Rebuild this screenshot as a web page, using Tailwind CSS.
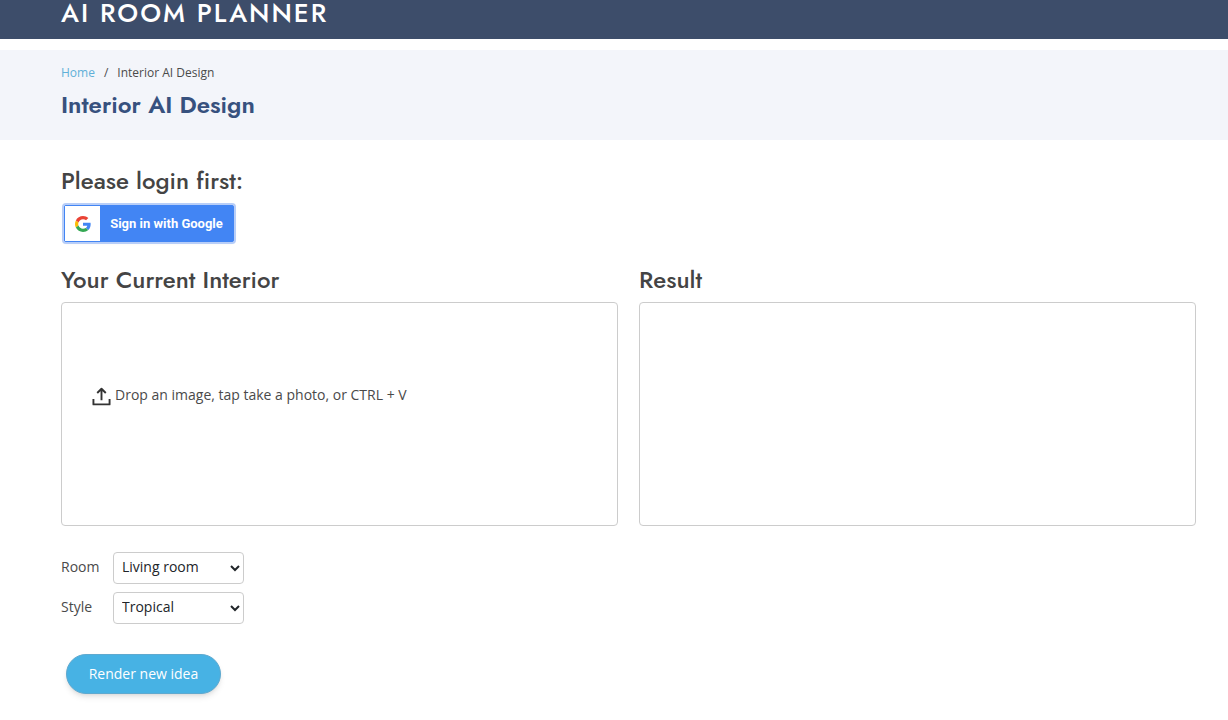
<!DOCTYPE html>
<html lang="en">
<head>
    <meta charset="UTF-8">
    <meta name="viewport" content="width=device-width, initial-scale=1.0">
    <title>Interior AI Design</title>
    <script src="https://cdn.jsdelivr.net/npm/@tailwindcss/browser@4"></script>
</head>
<body class="bg-white text-[#4a4a4a] font-['Open_Sans',sans-serif]">
    <header class="bg-[#3d4d6a] pl-[61px] pr-8 pb-[13px]">
        <a href="#" class="block text-[26px] leading-[26px] font-medium tracking-[2px] text-white uppercase font-['Jost','Lato',sans-serif]">AI Room Planner</a>
    </header>

    <!-- Breadcrumbs -->
    <section class="mt-[11px] bg-[#f3f5fa] pl-[61px] pr-8 pt-[13px] pb-[17px]">
        <nav aria-label="Breadcrumb">
            <ol class="flex text-[12px] leading-5">
                <li><a href="#" class="text-[#5fb0d8]">Home</a></li>
                <li class="flex"><span class="px-[9px]">/</span>Interior AI Design</li>
            </ol>
        </nav>
        <h2 class="mt-1 text-[24px] leading-9 font-semibold text-[#37517e] font-['Jost','Lato',sans-serif]">Interior AI Design</h2>
    </section>

    <main class="pl-[61px] pr-8 pt-[23px]">
        <h3 class="text-[24px] leading-9 font-medium text-[#444444] font-['Jost','Lato',sans-serif]">Please login first:</h3>
        <button type="button" class="mt-[6px] ml-[3px] flex h-[37px] w-[170px] items-center rounded-[2px] border border-[#4285f4] bg-[#4285f4] ring-2 ring-[#b8cef8] shadow-sm">
            <span class="flex h-[35px] w-[35px] items-center justify-center bg-white">
                <svg class="h-4 w-4" viewBox="0 0 48 48">
                    <path fill="#EA4335" d="M24 9.5c3.54 0 6.71 1.22 9.21 3.6l6.85-6.85C35.9 2.38 30.47 0 24 0 14.62 0 6.51 5.38 2.56 13.22l7.98 6.19C12.43 13.72 17.74 9.5 24 9.5z"/>
                    <path fill="#4285F4" d="M46.98 24.55c0-1.57-.15-3.09-.38-4.55H24v9.02h12.94c-.58 2.96-2.26 5.48-4.78 7.18l7.73 6c4.51-4.18 7.09-10.36 7.09-17.65z"/>
                    <path fill="#FBBC05" d="M10.53 28.59c-.48-1.45-.76-2.99-.76-4.59s.27-3.14.76-4.59l-7.98-6.19C.92 16.46 0 20.12 0 24c0 3.88.92 7.54 2.56 10.78l7.97-6.19z"/>
                    <path fill="#34A853" d="M24 48c6.48 0 11.93-2.13 15.89-5.81l-7.73-6c-2.15 1.45-4.92 2.3-8.16 2.3-6.26 0-11.57-4.22-13.47-9.91l-7.98 6.19C6.51 42.62 14.62 48 24 48z"/>
                </svg>
            </span>
            <span class="flex-1 text-center text-[13px] font-bold whitespace-nowrap text-white font-['Roboto',sans-serif]">Sign in with Google</span>
        </button>

        <div class="mt-5 grid grid-cols-2 gap-[21px]">
            <section>
                <h3 class="text-[24px] leading-9 font-medium text-[#444444] font-['Jost','Lato',sans-serif]">Your Current Interior</h3>
                <label class="mt-1 flex h-56 cursor-pointer items-start gap-1 rounded-[4px] border border-[#cccccc] px-[30px] pt-20">
                    <svg class="mt-1 h-[19px] w-[19px]" viewBox="0 0 20 20" fill="none" stroke="#333333" stroke-width="2" stroke-linejoin="round">
                        <path d="M1.5 12.5v5.8h17v-5.8M10 14V2M5.5 6.3L10 1.8l4.5 4.5"/>
                    </svg>
                    <span class="text-[14px] leading-6">Drop an image, tap take a photo, or CTRL + V</span>
                    <input type="file" accept="image/*" class="hidden">
                </label>
            </section>
            <section>
                <h3 class="text-[24px] leading-9 font-medium text-[#444444] font-['Jost','Lato',sans-serif]">Result</h3>
                <div class="mt-1 h-56 rounded-[4px] border border-[#cccccc]"></div>
            </section>
        </div>

        <form class="mt-[26px] text-[14px]">
            <div class="flex items-center">
                <label for="room" class="w-[52px] pb-1">Room</label>
                <select id="room" class="h-8 w-[131px] rounded-[4px] border border-[#cccccc] bg-white px-1 pb-[3px] text-[#212529]">
                    <option>Living room</option>
                    <option>Bedroom</option>
                    <option>Kitchen</option>
                </select>
            </div>
            <div class="mt-2 flex items-center">
                <label for="style" class="w-[52px] pb-1">Style</label>
                <select id="style" class="h-8 w-[131px] rounded-[4px] border border-[#cccccc] bg-white px-1 pb-[3px] text-[#212529]">
                    <option>Tropical</option>
                    <option>Modern</option>
                    <option>Minimalist</option>
                </select>
            </div>
            <button type="button" class="mt-[30px] ml-[5px] mb-6 h-10 w-[155px] rounded-full border border-[#5fa9cf] bg-[#47b2e4] pb-[2px] text-white shadow-md">Render new idea</button>
        </form>
    </main>
</body>
</html>
